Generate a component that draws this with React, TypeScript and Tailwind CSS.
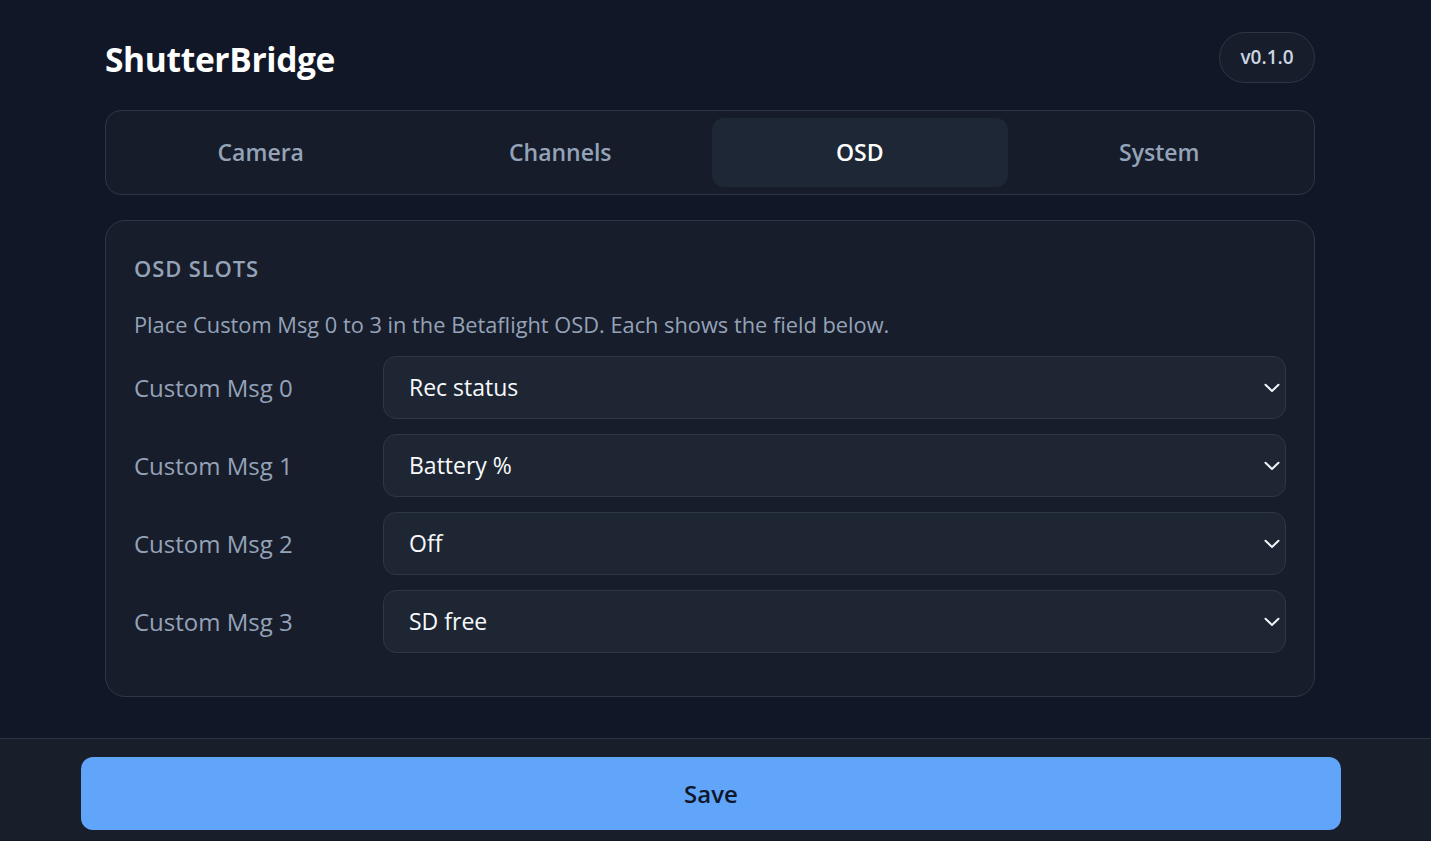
import { useState } from 'react';

const TABS = ['Camera', 'Channels', 'OSD', 'System'];

const OPTIONS = ['Off', 'Rec status', 'Battery %', 'SD free', 'Rec time', 'Mode'];

const INITIAL_SLOTS = ['Rec status', 'Battery %', 'Off', 'SD free'];

function Chevron() {
  return (
    <svg
      width="16"
      height="10"
      viewBox="0 0 16 10"
      fill="none"
      className="pointer-events-none absolute right-[6px] top-1/2 -translate-y-1/2"
    >
      <path d="M1.5 1.8 L8 8 L14.5 1.8" stroke="#f1f5f9" strokeWidth="2" strokeLinecap="round" strokeLinejoin="round" />
    </svg>
  );
}

function SlotRow({
  index,
  value,
  onChange,
}: {
  index: number;
  value: string;
  onChange: (v: string) => void;
}) {
  return (
    <div className="grid grid-cols-[249px_1fr] items-center">
      <label className="text-[24px] text-[#94a3b8]">Custom Msg {index}</label>
      <div className="relative">
        <select
          value={value}
          onChange={(e) => onChange(e.target.value)}
          className="h-[63px] w-full appearance-none rounded-[13px] border border-[#2e3747] bg-[#1e2634] pl-[25px] pr-10 text-[23px] text-[#f8fafc] outline-none"
        >
          {OPTIONS.map((opt) => (
            <option key={opt} value={opt}>
              {opt}
            </option>
          ))}
        </select>
        <Chevron />
      </div>
    </div>
  );
}

export default function App() {
  const [active, setActive] = useState('OSD');
  const [slots, setSlots] = useState(INITIAL_SLOTS);

  const updateSlot = (i: number, v: string) => {
    setSlots((prev) => prev.map((s, idx) => (idx === i ? v : s)));
  };

  return (
    <div
      className="flex min-h-screen flex-col bg-[#111726]"
      style={{ fontFamily: '"Open Sans", "Noto Sans", sans-serif' }}
    >
      <main className="ml-[105px] w-[1210px] pt-8">
        <header className="flex h-[51px] items-center justify-between">
          <h1 className="pt-[3px] text-[33.5px] font-bold tracking-[-0.01em] text-white">ShutterBridge</h1>
          <span className="flex h-[51px] w-[96px] items-center justify-center rounded-full border border-[#2e3646] bg-[#171d2b] text-[19px] font-semibold text-[#cbd5e1]">
            v0.1.0
          </span>
        </header>

        <nav className="mt-[27px] grid grid-cols-4 gap-1 rounded-2xl border border-[#2e3646] bg-[#161c2a] p-[7px]">
          {TABS.map((tab) => (
            <button
              key={tab}
              onClick={() => setActive(tab)}
              className={
                active === tab
                  ? 'h-[69px] rounded-xl bg-[#1e2735] text-[23px] font-semibold text-white'
                  : 'h-[69px] rounded-xl text-[23px] font-semibold text-[#94a3b8]'
              }
            >
              {tab}
            </button>
          ))}
        </nav>

        <section className="mt-[25px] rounded-[20px] border border-[#2e3646] bg-[#181d2b] px-[28px] pb-[43px] pt-[28px]">
          <h2 className="text-[22px] font-semibold uppercase leading-[38px] tracking-[0.04em] text-[#94a3b8]">
            OSD Slots
          </h2>
          <p className="mt-[22px] text-[21.8px] leading-[32px] text-[#94a3b8]">
            Place Custom Msg 0 to 3 in the Betaflight OSD. Each shows the field below.
          </p>
          <div className="mt-[15px] flex flex-col gap-[15px]">
            {slots.map((value, i) => (
              <SlotRow key={i} index={i} value={value} onChange={(v) => updateSlot(i, v)} />
            ))}
          </div>
        </section>
      </main>

      <footer className="mt-[41px] border-t border-[#2b3240] bg-[#191e2b] pb-[10px] pl-[81px] pt-[18px]">
        <button className="h-[73px] w-[1260px] rounded-xl bg-[#60a5fa] text-[24px] font-semibold text-[#0f172a]">
          Save
        </button>
      </footer>
    </div>
  );
}
